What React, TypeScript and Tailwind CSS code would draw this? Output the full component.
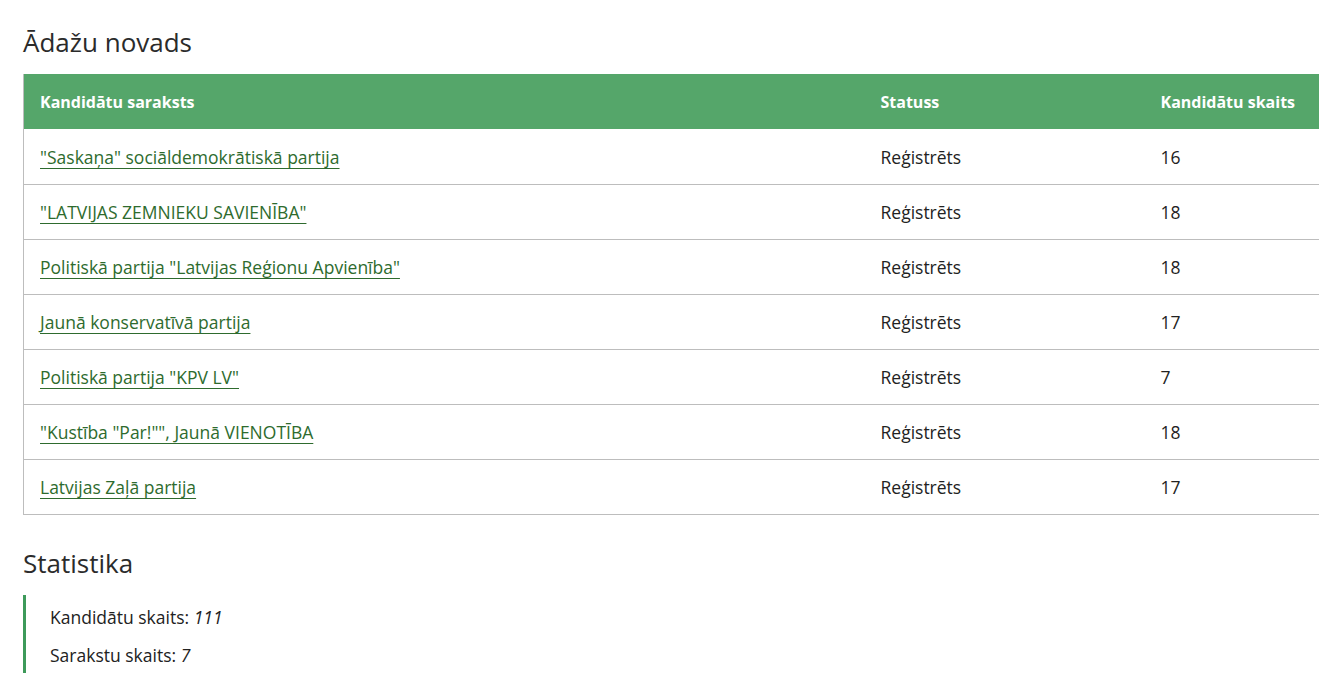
const lists = [
  { name: '"Saskaņa" sociāldemokrātiskā partija', status: 'Reģistrēts', count: 16 },
  { name: '"LATVIJAS ZEMNIEKU SAVIENĪBA"', status: 'Reģistrēts', count: 18 },
  { name: 'Politiskā partija "Latvijas Reģionu Apvienība"', status: 'Reģistrēts', count: 18 },
  { name: 'Jaunā konservatīvā partija', status: 'Reģistrēts', count: 17 },
  { name: 'Politiskā partija "KPV LV"', status: 'Reģistrēts', count: 7 },
  { name: '"Kustība "Par!"", Jaunā VIENOTĪBA', status: 'Reģistrēts', count: 18 },
  { name: 'Latvijas Zaļā partija', status: 'Reģistrēts', count: 17 },
];

export default function App() {
  return (
    <div className="min-h-screen bg-white pl-[23px] text-[#333] font-['Open_Sans',sans-serif]">
      <h2 className="pt-[24px] pb-[14px] text-[26px] leading-[36px] font-medium text-[#2b2b2b]">Ādažu novads</h2>

      <table className="w-[1296px] border-collapse border-l border-[#bdbdbd] text-[17.5px]">
        <thead>
          <tr className="h-[55px] bg-[#55a66a] text-left text-[16px] text-white">
            <th className="w-[841px] pl-[16px] font-bold">Kandidātu saraksts</th>
            <th className="w-[280px] pl-[16px] font-bold">Statuss</th>
            <th className="pl-[16px] font-bold">Kandidātu skaits</th>
          </tr>
        </thead>
        <tbody>
          {lists.map((l) => (
            <tr key={l.name} className="h-[55px] border-b border-[#bdbdbd]">
              <td className="pl-[16px] pt-[2px]">
                <a href="#" className="text-[#2e6b2e] underline underline-offset-[4px]">
                  {l.name}
                </a>
              </td>
              <td className="pl-[16px] pt-[2px] text-[#222]">{l.status}</td>
              <td className="pl-[16px] pt-[2px] text-[#222]">{l.count}</td>
            </tr>
          ))}
        </tbody>
      </table>

      <h2 className="pt-[30px] pb-[14px] text-[26px] leading-[36px] font-medium text-[#2b2b2b]">Statistika</h2>

      <div className="border-l-[3px] border-[#3d9a5a] pt-[2px] pl-[24px] text-[17.5px] text-[#222]">
        <p className="leading-[40px]">
          Kandidātu skaits: <em>111</em>
        </p>
        <p className="leading-[36px]">
          Sarakstu skaits: <em>7</em>
        </p>
      </div>
    </div>
  );
}
